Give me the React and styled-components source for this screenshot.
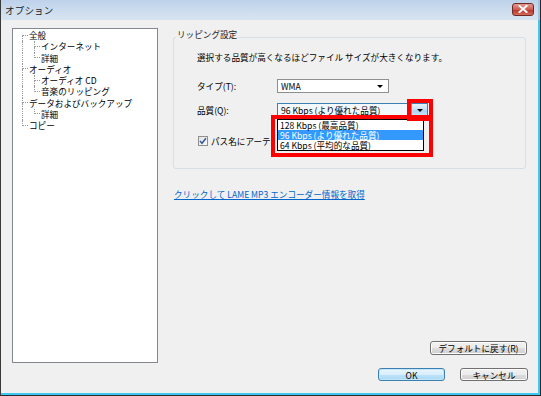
import React from 'react';
import styled, { createGlobalStyle } from 'styled-components';

const Global = createGlobalStyle`
  html, body { margin: 0; padding: 0; background: #f0f0f0; }
  body { font-family: "Noto Sans CJK JP", "Liberation Sans", sans-serif; }
`;

const Frame = styled.div`
  width: 541px;
  height: 396px;
  box-sizing: border-box;
  display: flex;
  flex-direction: column;
  border-left: 1px solid #3b3b3b;
  border-right: 1px solid #2a2a2a;
  border-bottom: 1px solid #2a2a2a;
  background: #f0f0f0;
  font-family: "Noto Sans CJK JP", sans-serif;
  font-size: 8.6px;
  color: #000;
`;

const TitleBar = styled.div`
  height: 20px;
  flex-shrink: 0;
  display: flex;
  align-items: center;
  justify-content: space-between;
  padding: 0 4px 0 4px;
  background: linear-gradient(#bcd1ea, #cfdeef 60%, #d6e3f1);
  border-right: 2px solid #9fc4e6;
`;

const TitleText = styled.span`
  font-size: 9.5px;
  color: #1a1a1a;
  letter-spacing: 0.2px;
`;

const CloseButton = styled.div`
  width: 22px;
  height: 13px;
  box-sizing: border-box;
  border: 1px solid #6e2b25;
  border-radius: 3px;
  background: linear-gradient(#e39a90, #cf5a4e 50%, #b8342a 55%, #d86b5c);
  display: flex;
  align-items: center;
  justify-content: center;
  margin-top: -2px;
`;

const Body = styled.div`
  flex: 1;
  display: grid;
  grid-template-columns: 146px 1fr;
  grid-template-rows: 1fr auto;
  column-gap: 15px;
  row-gap: 5px;
  padding: 8px 12px 12px 11px;
  border-right: 2px solid #3ec7f0;
  border-bottom: 2px solid #3ec7f0;
  min-height: 0;
`;

const Tree = styled.div`
  border: 1px solid #828790;
  background: #fff;
  padding: 1px 0 0 9px;
  display: flex;
  flex-direction: column;
`;

const TreeRow = styled.div`
  display: flex;
  height: 11.25px;
  line-height: 11.25px;
  white-space: nowrap;
`;

const Pipe = styled.span`
  width: 12px;
  flex-shrink: 0;
  box-sizing: border-box;
  border-left: 1px dotted #9a9a9a;
`;

const Elbow = styled.span`
  width: 6px;
  flex-shrink: 0;
  display: flex;
  flex-direction: column;
  &::before {
    content: '';
    height: 50%;
    box-sizing: border-box;
    border-left: ${p => (p.$first ? 'none' : '1px dotted #9a9a9a')};
    border-bottom: 1px dotted #9a9a9a;
  }
  &::after {
    content: '';
    flex: 1;
    border-left: ${p => (p.$last ? 'none' : '1px dotted #9a9a9a')};
  }
`;

const TreeLabel = styled.span`
  padding: 0 1px;
`;

const RightCol = styled.div`
  display: flex;
  flex-direction: column;
  min-height: 0;
`;

const GroupBox = styled.div`
  margin-top: 9px;
  border: 1px solid #d5dfe5;
  border-radius: 3px;
  padding: 0 0 22px 0;
`;

const GroupTitle = styled.div`
  margin: -9px 0 0 2px;
  padding: 0 1px;
  width: fit-content;
  line-height: 10px;
  background: #f0f0f0;
  color: #1e1e1e;
`;

const GroupContent = styled.div`
  padding-left: 23px;
  display: flex;
  flex-direction: column;
`;

const Description = styled.div`
  margin-top: 13px;
  line-height: 11px;
`;

const FieldRow = styled.div`
  display: grid;
  grid-template-columns: 80px auto;
  align-items: center;
  height: 14px;
  margin-top: ${p => p.$gap}px;
`;

const Label = styled.span`
  line-height: 11px;
`;

const Select = styled.div`
  position: relative;
  width: ${p => p.$w}px;
  height: 14px;
  box-sizing: border-box;
  border: 1px solid ${p => (p.$open ? '#3c7fb1' : '#8e8f8f')};
  background: ${p => (p.$open ? '#f3f8fd' : '#fff')};
  display: flex;
  align-items: center;
  padding-left: 3px;
  line-height: 11px;
`;

const SelectText = styled.span`
  flex: 1;
  white-space: nowrap;
`;

const ArrowArea = styled.span`
  width: 16px;
  height: 100%;
  display: flex;
  align-items: center;
  justify-content: center;
  flex-shrink: 0;
`;

const DropButton = styled.span`
  width: 16px;
  height: 12px;
  box-sizing: border-box;
  border-left: 1px solid #6a98c0;
  background: linear-gradient(#e6f3fc, #c4e0f6 50%, #a9d3f2 55%, #cde7f9);
  display: flex;
  align-items: center;
  justify-content: center;
  flex-shrink: 0;
`;

const Triangle = styled.span`
  width: 0;
  height: 0;
  border-left: 3px solid transparent;
  border-right: 3px solid transparent;
  border-top: 3px solid #000;
`;

const DropList = styled.div`
  position: absolute;
  top: 15px;
  left: -1px;
  width: 147px;
  box-sizing: border-box;
  border: 1px solid #000;
  background: #fff;
  z-index: 2;
`;

const DropItem = styled.div`
  height: 10px;
  line-height: 10px;
  padding-left: 2px;
  white-space: nowrap;
  background: ${p => (p.$active ? '#3399ff' : 'transparent')};
  color: ${p => (p.$active ? '#fff' : '#000')};
`;

const RedFrame = styled.div`
  position: absolute;
  left: ${p => p.$x}px;
  top: ${p => p.$y}px;
  width: ${p => p.$w}px;
  height: ${p => p.$h}px;
  box-sizing: border-box;
  border: 4px solid #ff0000;
  z-index: 3;
  pointer-events: none;
`;

const CheckRow = styled.div`
  display: flex;
  align-items: center;
  gap: 3px;
  margin-top: 19px;
  height: 10px;
  padding-left: 1px;
  line-height: 11px;
  white-space: nowrap;
`;

const CheckBox = styled.span`
  width: 10px;
  height: 10px;
  box-sizing: border-box;
  border: 1px solid #8e8f8f;
  background: linear-gradient(135deg, #e2e2e2, #fbfbfb);
  display: flex;
  align-items: center;
  justify-content: center;
  flex-shrink: 0;
`;

const CheckLabel = styled.span`
  max-width: 60px;
  overflow: hidden;
`;

const Link = styled.a`
  margin: 20px 0 0 1px;
  line-height: 11px;
  color: #0066cc;
  text-decoration: underline;
  width: fit-content;
  cursor: pointer;
`;

const Button = styled.button`
  width: ${p => p.$w}px;
  height: ${p => p.$h}px;
  box-sizing: border-box;
  padding: 0;
  font-family: inherit;
  font-size: 8.6px;
  line-height: 10px;
  color: #000;
  border: 1px solid ${p => (p.$default ? '#3c7fb1' : '#707070')};
  border-radius: 3px;
  background: ${p =>
    p.$default
      ? 'linear-gradient(#e9f5fd, #d8eefb 50%, #bee3f9 51%, #a7d9f5)'
      : 'linear-gradient(#f2f2f2, #ebebeb 50%, #dddddd 51%, #cfcfcf)'};
  box-shadow: inset 0 0 0 1px ${p => (p.$default ? '#c4e5f6' : '#fcfcfc')};
`;

const DefaultsButton = styled(Button)`
  margin-top: auto;
  align-self: flex-end;
  margin-right: -1px;
  margin-bottom: 8px;
`;

const Footer = styled.div`
  grid-column: 1 / -1;
  display: flex;
  justify-content: flex-end;
  gap: 15px;
  margin-right: -2px;
`;

const tree = [
  { label: '全般', level: 0, first: true },
  { label: 'インターネット', level: 1 },
  { label: '詳細', level: 1, last: true },
  { label: 'オーディオ', level: 0 },
  { label: 'オーディオ CD', level: 1 },
  { label: '音楽のリッピング', level: 1, last: true },
  { label: 'データおよびバックアップ', level: 0 },
  { label: '詳細', level: 1, last: true },
  { label: 'コピー', level: 0, last: true },
];

export default function App() {
  return (
    <>
      <Global />
      <Frame>
        <TitleBar>
          <TitleText>オプション</TitleText>
          <CloseButton>
            <svg width="10" height="8" viewBox="0 0 10 8">
              <path d="M1.5 1 L8.5 7 M8.5 1 L1.5 7" stroke="#fff" strokeWidth="2" strokeLinecap="square" />
            </svg>
          </CloseButton>
        </TitleBar>
        <Body>
          <Tree>
            {tree.map((t, i) => (
              <TreeRow key={i}>
                {t.level === 1 && <Pipe />}
                <Elbow $first={t.first} $last={t.last} />
                <TreeLabel>{t.label}</TreeLabel>
              </TreeRow>
            ))}
          </Tree>
          <RightCol>
            <GroupBox>
              <GroupTitle>リッピング設定</GroupTitle>
              <GroupContent>
                <Description>選択する品質が高くなるほどファイル サイズが大きくなります。</Description>
                <FieldRow $gap={16}>
                  <Label>タイプ(T):</Label>
                  <Select $w={112}>
                    <SelectText>WMA</SelectText>
                    <ArrowArea><Triangle /></ArrowArea>
                  </Select>
                </FieldRow>
                <FieldRow $gap={10}>
                  <Label>品質(Q):</Label>
                  <Select $w={151} $open>
                    <SelectText>96 Kbps (より優れた品質)</SelectText>
                    <DropButton><Triangle /></DropButton>
                    <DropList>
                      <DropItem>128 Kbps (最高品質)</DropItem>
                      <DropItem $active>96 Kbps (より優れた品質)</DropItem>
                      <DropItem>64 Kbps (平均的な品質)</DropItem>
                    </DropList>
                    <RedFrame $x={129} $y={-5} $w={26} $h={22} />
                    <RedFrame $x={-7} $y={11} $w={162} $h={42} />
                  </Select>
                </FieldRow>
                <CheckRow>
                  <CheckBox>
                    <svg width="8" height="8" viewBox="0 0 8 8">
                      <path d="M1 4 L3 6.2 L7 1.2" fill="none" stroke="#3d5a9c" strokeWidth="1.6" />
                    </svg>
                  </CheckBox>
                  <CheckLabel>パス名にアーティスト名を含める</CheckLabel>
                </CheckRow>
              </GroupContent>
            </GroupBox>
            <Link>クリックして LAME MP3 エンコーダー情報を取得</Link>
            <DefaultsButton $w={97} $h={14}>デフォルトに戻す(R)</DefaultsButton>
          </RightCol>
          <Footer>
            <Button $w={67} $h={13} $default>OK</Button>
            <Button $w={68} $h={13}>キャンセル</Button>
          </Footer>
        </Body>
      </Frame>
    </>
  );
}
